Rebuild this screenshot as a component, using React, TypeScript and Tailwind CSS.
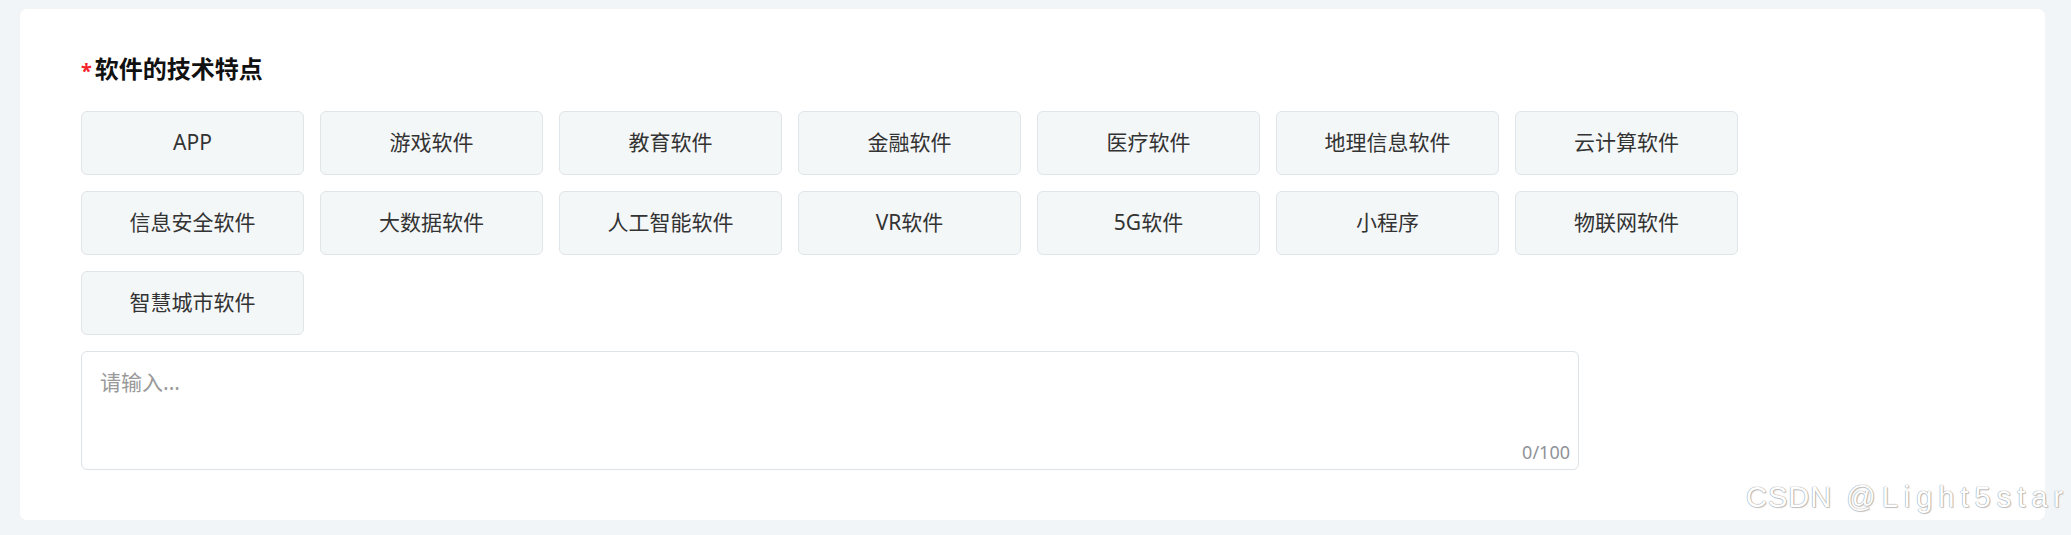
import React from "react";

const tags = [
  "APP",
  "游戏软件",
  "教育软件",
  "金融软件",
  "医疗软件",
  "地理信息软件",
  "云计算软件",
  "信息安全软件",
  "大数据软件",
  "人工智能软件",
  "VR软件",
  "5G软件",
  "小程序",
  "物联网软件",
  "智慧城市软件",
];

export default function App() {
  return (
    <div
      className="relative h-[535px] w-full overflow-hidden bg-[#f2f5f8] pt-[9px] pl-[20px] pr-[26px]"
      style={{ fontFamily: '"Noto Sans", "Noto Sans CJK SC", sans-serif' }}
    >
      <section className="h-[511px] rounded-[7px] bg-white pl-[61px] pt-[44px]">
        {/* Title */}
        <h2 className="flex h-[32px] items-center text-[24px] font-bold leading-[32px] text-[#111]">
          <span className="mr-[3px] mt-[4px] text-[20px] text-[#f5222d]">*</span>
          软件的技术特点
        </h2>

        {/* Tag buttons */}
        <div className="mt-[26px] grid grid-cols-[repeat(7,223px)] gap-4">
          {tags.map((t) => (
            <button
              key={t}
              className="flex h-[64px] items-center justify-center rounded-[6px] border border-[#dfe5e8] bg-[#f4f7f8] text-[21px] text-[#333]"
            >
              {t}
            </button>
          ))}
        </div>

        {/* Textarea */}
        <div className="relative mt-4 h-[119px] w-[1498px] rounded-[6px] border border-[#dde3e6] bg-white">
          <textarea
            placeholder="请输入..."
            className="h-full w-full resize-none rounded-[6px] bg-transparent px-[18px] pt-[14px] text-[21px] leading-[32px] text-[#333] outline-none placeholder:text-[#999]"
          />
          <span className="absolute bottom-[5px] right-[8px] text-[18px] leading-[24px] text-[#909399]">
            0/100
          </span>
        </div>
      </section>

      {/* Watermark */}
      <span
        className="absolute bottom-[20px] right-[2px] whitespace-nowrap text-[29px] leading-[36px] text-white"
        style={{
          fontFamily: '"Liberation Sans", sans-serif',
          textShadow: "0 0 1px #9a9a9a, 0 0 1px #9a9a9a, 1px 1px 1px #c8c8c8",
        }}
      >
        <span className="tracking-[1px]">CSDN</span>
        <span className="tracking-[6px]"> @Light5star</span>
      </span>
    </div>
  );
}
